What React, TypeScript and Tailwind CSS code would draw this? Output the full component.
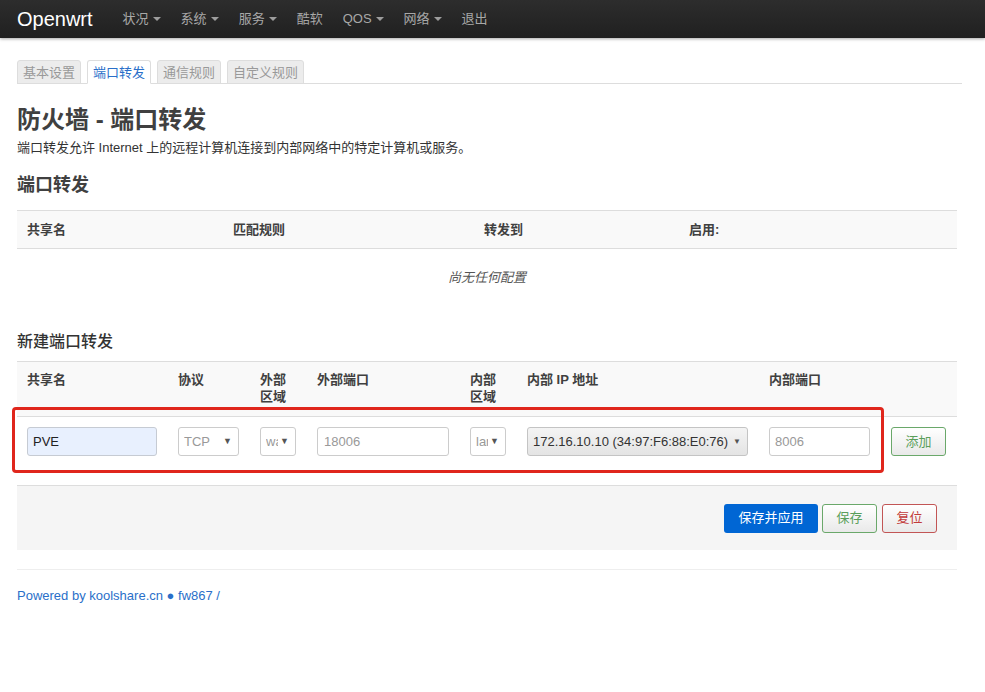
import React from "react";

const navItems = [
  { name: "状况", caret: true },
  { name: "系统", caret: true },
  { name: "服务", caret: true },
  { name: "酷软", caret: false },
  { name: "QOS", caret: true },
  { name: "网络", caret: true },
  { name: "退出", caret: false },
];

const tabs = [
  { name: "基本设置", active: false },
  { name: "端口转发", active: true },
  { name: "通信规则", active: false },
  { name: "自定义规则", active: false },
];

function Caret() {
  return (
    <span className="ml-[4px] inline-block h-0 w-0 border-x-[4px] border-t-[4px] border-x-transparent border-t-[#9d9d9d] align-middle" />
  );
}

function FakeSelect({ text, width, muted = true }: { text: string; width: string; muted?: boolean }) {
  return (
    <div
      className={`${width} flex h-[29px] items-center overflow-hidden rounded-[3px] border border-[#ccc] bg-white pl-[5px] pr-[6px] text-[13px] ${
        muted ? "text-[#999]" : "text-[#333]"
      }`}
    >
      <span className="flex-1 overflow-hidden whitespace-nowrap">{text}</span>
      <span className="ml-[2px] text-[9px] text-[#555]">▼</span>
    </div>
  );
}

export default function App() {
  return (
    <div className="min-h-[692px] bg-white font-['Liberation_Sans','Noto_Sans_CJK_SC',sans-serif] text-[13px] text-[#333]">
      {/* navbar */}
      <header className="flex h-[38px] items-center bg-gradient-to-b from-[#2d2d2d] to-[#202020] shadow-[0_1px_3px_rgba(0,0,0,0.35)]">
        <span className="ml-[17px] text-[20px] leading-none text-white">Openwrt</span>
        <nav className="ml-[20px] flex items-center">
          {navItems.map((item) => (
            <span key={item.name} className="flex items-center px-[10px] text-[13px] text-[#a8a8a8]">
              {item.name}
              {item.caret && <Caret />}
            </span>
          ))}
        </nav>
      </header>

      <main className="px-[17px]">
        {/* tabs */}
        <div className="mt-[22px] flex h-[24px] w-[945px] items-end border-b border-[#ddd]">
          {tabs.map((t) => (
            <div
              key={t.name}
              className={`mr-[6px] -mb-px flex h-[24px] items-center rounded-t-[3px] border px-[5px] text-[13px] leading-none ${
                t.active
                  ? "border-[#ddd] border-b-white bg-white text-[#2a6fc9]"
                  : "border-[#ddd] bg-[#ececec] text-[#999]"
              }`}
            >
              {t.name}
            </div>
          ))}
        </div>

        <h1 className="mt-[21px] text-[24px] font-bold leading-[30px] text-[#404040]">防火墙 - 端口转发</h1>
        <p className="mt-[4px] text-[13px] leading-[18px]">
          端口转发允许 Internet 上的远程计算机连接到内部网络中的特定计算机或服务。
        </p>

        <h3 className="mt-[16px] text-[18px] font-bold leading-[24px] text-[#404040]">端口转发</h3>

        {/* existing rules table */}
        <div className="mt-[13px] w-[940px]">
          <div className="grid h-[39px] grid-cols-[206px_251px_205px_278px] items-center border-y border-[#ddd] bg-[#f9f9f9] text-[13px] font-semibold text-[#404040]">
            <span className="pl-[10px]">共享名</span>
            <span className="pl-[10px]">匹配规则</span>
            <span className="pl-[10px]">转发到</span>
            <span className="pl-[10px]">启用:</span>
          </div>
          <div className="flex h-[58px] items-center justify-center text-[13px] italic text-[#555]">尚无任何配置</div>
        </div>

        <h3 className="mt-[24px] text-[16px] font-medium leading-[22px] text-[#333]">新建端口转发</h3>

        {/* new rule table */}
        <div className="relative mt-[8px] w-[940px]">
          <div className="grid h-[56px] grid-cols-[151px_82px_57px_153px_57px_242px_122px_76px] border-y border-[#ddd] bg-[#f9f9f9] pt-[9px] text-[13px] font-semibold leading-[17px] text-[#404040]">
            <span className="pl-[10px]">共享名</span>
            <span className="pl-[10px]">协议</span>
            <span className="pl-[10px]">
              外部
              <br />
              区域
            </span>
            <span className="pl-[10px]">外部端口</span>
            <span className="pl-[10px]">
              内部
              <br />
              区域
            </span>
            <span className="pl-[10px]">内部 IP 地址</span>
            <span className="pl-[10px]">内部端口</span>
            <span />
          </div>

          <div className="grid h-[68px] grid-cols-[151px_82px_57px_153px_57px_242px_122px_76px] items-start pt-[10px]">
            <div className="pl-[10px]">
              <input
                readOnly
                value="PVE"
                className="h-[29px] w-[130px] rounded-[3px] border border-[#c6cbd3] bg-[#e8f0fe] px-[5px] text-[13px] text-[#222] outline-none"
              />
            </div>
            <div className="pl-[10px]">
              <FakeSelect text="TCP" width="w-[61px]" />
            </div>
            <div className="pl-[10px]">
              <FakeSelect text="wan" width="w-[36px]" />
            </div>
            <div className="pl-[10px]">
              <input
                readOnly
                placeholder="18006"
                className="h-[29px] w-[132px] rounded-[3px] border border-[#ccc] bg-white px-[6px] text-[13px] outline-none placeholder:text-[#999]"
              />
            </div>
            <div className="pl-[10px]">
              <FakeSelect text="lan" width="w-[36px]" />
            </div>
            <div className="pl-[10px]">
              <div className="flex h-[29px] w-[221px] items-center rounded-[3px] border border-[#c4c4c4] bg-gradient-to-b from-[#f4f4f4] to-[#e4e4e4] pl-[5px] pr-[6px] text-[13px] text-[#333]">
                <span className="flex-1 whitespace-nowrap">172.16.10.10 (34:97:F6:88:E0:76)</span>
                <span className="text-[8px] text-[#555]">▼</span>
              </div>
            </div>
            <div className="pl-[10px]">
              <input
                readOnly
                placeholder="8006"
                className="h-[29px] w-[101px] rounded-[3px] border border-[#ccc] bg-white px-[5px] text-[13px] outline-none placeholder:text-[#999]"
              />
            </div>
            <div className="pl-[10px]">
              <button className="h-[29px] w-[55px] rounded-[3px] border border-[#6aa86a] bg-gradient-to-b from-white to-[#e9e9e9] text-[13px] text-[#5a9f5a]">
                添加
              </button>
            </div>
          </div>

          {/* annotation box */}
          <div className="pointer-events-none absolute left-[-5px] top-[46px] h-[66px] w-[872px] rounded-[4px] border-[3px] border-[#e0261c]" />

          {/* actions */}
          <div className="flex h-[65px] items-center justify-end gap-[4px] border-t border-[#ddd] bg-[#f5f5f5] pr-[20px]">
            <button className="h-[29px] w-[94px] rounded-[3px] bg-[#0066d4] text-[13px] text-white">保存并应用</button>
            <button className="h-[29px] w-[55px] rounded-[3px] border border-[#6aa86a] bg-gradient-to-b from-white to-[#e9e9e9] text-[13px] text-[#5a9f5a]">
              保存
            </button>
            <button className="ml-[1px] h-[29px] w-[55px] rounded-[3px] border border-[#c25555] bg-gradient-to-b from-white to-[#e9e9e9] text-[13px] text-[#c23a3a]">
              复位
            </button>
          </div>
        </div>

        <footer className="mt-[19px] w-[940px] border-t border-[#eee] pt-[17px] text-[13px] leading-[18px] text-[#2a6fc9]">
          Powered by koolshare.cn ● fw867 /
        </footer>
      </main>
    </div>
  );
}
